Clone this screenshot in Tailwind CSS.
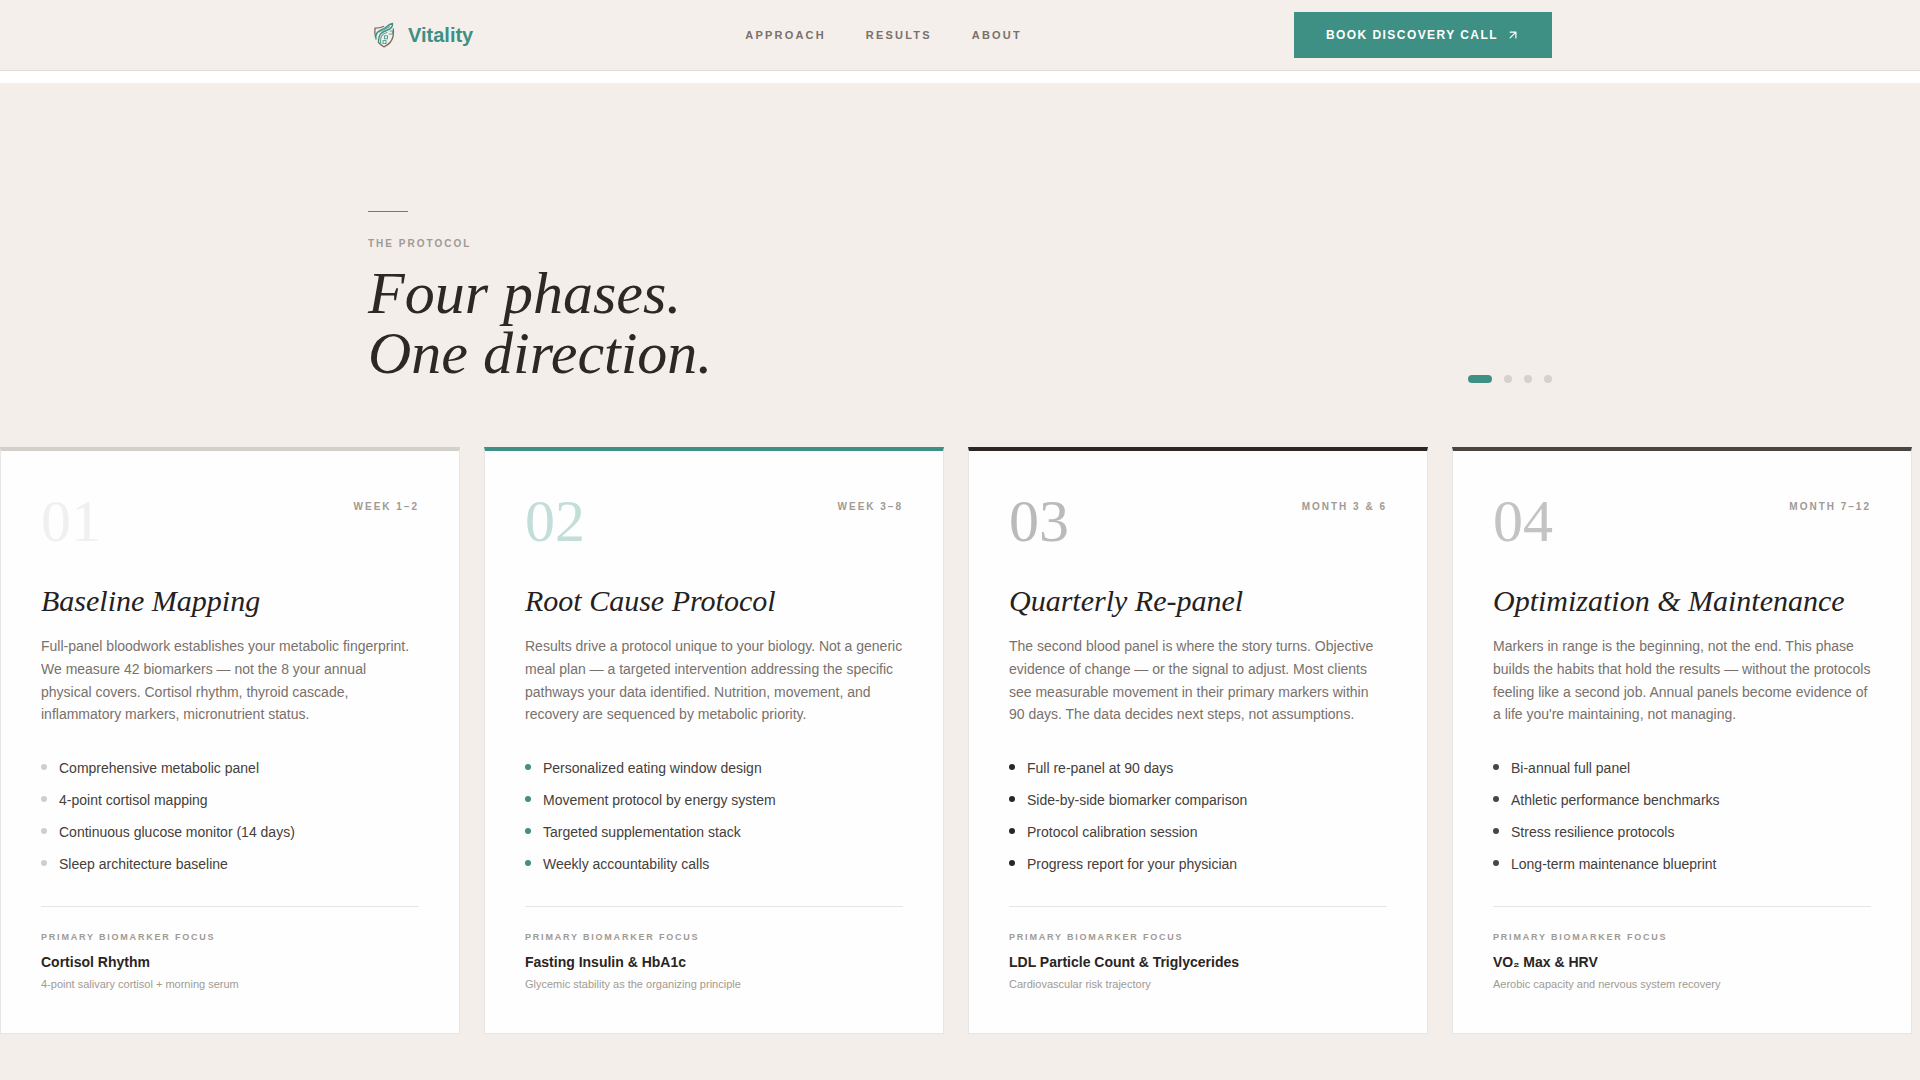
<!DOCTYPE html>
<html lang="en">
<head>
<meta charset="utf-8">
<meta name="viewport" content="width=device-width, initial-scale=1">
<title>Vitality</title>
<script src="https://cdn.jsdelivr.net/npm/@tailwindcss/browser@4"></script>
</head>
<body class="flex min-h-screen flex-col bg-white font-['Liberation_Sans',Arial,sans-serif]">
<header class="border-b border-[#dfdcd9] bg-[#f4efeb]">
  <div class="mx-auto flex max-w-[1280px] items-center justify-between px-12 py-3">
    <a href="#" class="flex items-center gap-2">
      <svg class="size-8" viewBox="0 0 32 32" fill="none" stroke-linecap="round" stroke-linejoin="round" aria-hidden="true">
        <path d="M15.500 7.500C12.500 9 9.800 9.200 7 9.200C6.700 12 6.700 15 7.500 18M25.300 10C26 16 24.500 24 16 27.800C13.500 26.800 11.500 25 10.300 23.200" stroke="#7a6a60" stroke-width="1.300"/>
        <path d="M8 20C7 12.500 11.500 11.800 16 9.500C19 8 20 5.500 24.500 4.500C24.800 8 23 9.800 19.500 11C14 13 10.800 14.500 10.500 22.500" stroke="#3d9083" stroke-width="1.400"/>
        <path d="M12.800 25C11.800 17.500 14 14.800 19 13.500M22 12h2.500v3h-3.500M11 13C14 11 18 10 21.500 7.500" stroke="#5ba396" stroke-width="1.100"/>
        <path d="M16.500 16.800h3v2.900h-3zM15 21.500h3v3h-3z" stroke="#5ba396" stroke-width="1.100"/>
      </svg>
      <span class="text-xl font-bold text-[#3d9083]">Vitality</span>
    </a>
    <nav class="flex gap-10 text-[11px] font-bold tracking-[0.2em] text-[#78716c]">
      <a href="#approach">APPROACH</a>
      <a href="#results">RESULTS</a>
      <a href="#about">ABOUT</a>
    </nav>
    <button type="button" class="flex items-center gap-2 bg-[#3d9083] px-8 py-[14px] text-xs/[18px] font-bold tracking-[0.12em] text-white">
      BOOK DISCOVERY CALL
      <svg class="size-[14px]" viewBox="0 0 24 24" fill="none" stroke="currentColor" stroke-width="2" stroke-linecap="round" stroke-linejoin="round" aria-hidden="true"><path d="M7 7h10v10M7 17 17 7"/></svg>
    </button>
  </div>
</header>

<main class="mt-3 grow bg-[#f3eeea] pt-32 pb-10" id="approach">
  <div class="mx-auto flex max-w-[1280px] items-end justify-between px-12">
    <div>
      <div class="h-px w-10 bg-[#3d9083]"></div>
      <p class="mt-6 text-[10px]/[15px] font-bold tracking-[0.2em] text-[#a09a94]">THE PROTOCOL</p>
      <h1 class="mt-3 font-['Liberation_Serif',serif] text-[60px]/[60px] text-[#2d2825] italic">Four phases.<br>One direction.</h1>
    </div>
    <div class="flex gap-3">
      <button type="button" aria-label="Phase 1" class="h-2 w-6 rounded-full bg-[#3d9083]"></button>
      <button type="button" aria-label="Phase 2" class="size-2 rounded-full bg-[#d6d1cd]"></button>
      <button type="button" aria-label="Phase 3" class="size-2 rounded-full bg-[#d6d1cd]"></button>
      <button type="button" aria-label="Phase 4" class="size-2 rounded-full bg-[#d6d1cd]"></button>
    </div>
  </div>

  <div class="mt-16 flex gap-6 overflow-x-auto">
    <article class="w-[460px] shrink-0 border border-t-4 border-[#e7e5e4] border-t-[#d3d0cc] bg-[#fefefe] p-10">
      <div class="flex items-start justify-between">
        <span class="font-['Liberation_Serif',serif] text-[60px]/[60px] text-[#f0f0f0]">01</span>
        <span class="pt-2 text-[10px]/[15px] font-bold tracking-[0.2em] text-[#a09a94]">WEEK 1–2</span>
      </div>
      <h2 class="mt-8 font-['Liberation_Serif',serif] text-3xl text-[#24211f] italic">Baseline Mapping</h2>
      <p class="mt-4 text-sm leading-relaxed text-[#78716c]">Full-panel bloodwork establishes your metabolic fingerprint. We measure 42 biomarkers — not the 8 your annual physical covers. Cortisol rhythm, thyroid cascade, inflammatory markers, micronutrient status.</p>
      <ul class="mt-8 flex flex-col gap-3 text-sm text-[#44403c]">
        <li class="flex gap-3"><span class="mt-[6px] size-[6px] rounded-full bg-[#d0cecb]"></span>Comprehensive metabolic panel</li>
        <li class="flex gap-3"><span class="mt-[6px] size-[6px] rounded-full bg-[#d0cecb]"></span>4-point cortisol mapping</li>
        <li class="flex gap-3"><span class="mt-[6px] size-[6px] rounded-full bg-[#d0cecb]"></span>Continuous glucose monitor (14 days)</li>
        <li class="flex gap-3"><span class="mt-[6px] size-[6px] rounded-full bg-[#d0cecb]"></span>Sleep architecture baseline</li>
      </ul>
      <div class="mt-8 border-t border-[#e7e5e4] pt-6">
        <p class="text-[9px]/[13px] font-bold tracking-[0.2em] text-[#a09a94]">PRIMARY BIOMARKER FOCUS</p>
        <p class="mt-2 text-sm font-bold text-[#292524]">Cortisol Rhythm</p>
        <p class="mt-1 text-[11px]/[17px] text-[#a09a94]">4-point salivary cortisol + morning serum</p>
      </div>
    </article>

    <article class="w-[460px] shrink-0 border border-t-4 border-[#e7e5e4] border-t-[#3d9083] bg-[#fefefe] p-10">
      <div class="flex items-start justify-between">
        <span class="font-['Liberation_Serif',serif] text-[60px]/[60px] text-[#c3ddd9]">02</span>
        <span class="pt-2 text-[10px]/[15px] font-bold tracking-[0.2em] text-[#a09a94]">WEEK 3–8</span>
      </div>
      <h2 class="mt-8 font-['Liberation_Serif',serif] text-3xl text-[#24211f] italic">Root Cause Protocol</h2>
      <p class="mt-4 text-sm leading-relaxed text-[#78716c]">Results drive a protocol unique to your biology. Not a generic meal plan — a targeted intervention addressing the specific pathways your data identified. Nutrition, movement, and recovery are sequenced by metabolic priority.</p>
      <ul class="mt-8 flex flex-col gap-3 text-sm text-[#44403c]">
        <li class="flex gap-3"><span class="mt-[6px] size-[6px] rounded-full bg-[#3d9083]"></span>Personalized eating window design</li>
        <li class="flex gap-3"><span class="mt-[6px] size-[6px] rounded-full bg-[#3d9083]"></span>Movement protocol by energy system</li>
        <li class="flex gap-3"><span class="mt-[6px] size-[6px] rounded-full bg-[#3d9083]"></span>Targeted supplementation stack</li>
        <li class="flex gap-3"><span class="mt-[6px] size-[6px] rounded-full bg-[#3d9083]"></span>Weekly accountability calls</li>
      </ul>
      <div class="mt-8 border-t border-[#e7e5e4] pt-6">
        <p class="text-[9px]/[13px] font-bold tracking-[0.2em] text-[#a09a94]">PRIMARY BIOMARKER FOCUS</p>
        <p class="mt-2 text-sm font-bold text-[#292524]">Fasting Insulin &amp; HbA1c</p>
        <p class="mt-1 text-[11px]/[17px] text-[#a09a94]">Glycemic stability as the organizing principle</p>
      </div>
    </article>

    <article class="w-[460px] shrink-0 border border-t-4 border-[#e7e5e4] border-t-[#2c2624] bg-[#fefefe] p-10">
      <div class="flex items-start justify-between">
        <span class="font-['Liberation_Serif',serif] text-[60px]/[60px] text-[#bbbaba]">03</span>
        <span class="pt-2 text-[10px]/[15px] font-bold tracking-[0.2em] text-[#a09a94]">MONTH 3 &amp; 6</span>
      </div>
      <h2 class="mt-8 font-['Liberation_Serif',serif] text-3xl text-[#24211f] italic">Quarterly Re-panel</h2>
      <p class="mt-4 text-sm leading-relaxed text-[#78716c]">The second blood panel is where the story turns. Objective evidence of change — or the signal to adjust. Most clients see measurable movement in their primary markers within 90 days. The data decides next steps, not assumptions.</p>
      <ul class="mt-8 flex flex-col gap-3 text-sm text-[#44403c]">
        <li class="flex gap-3"><span class="mt-[6px] size-[6px] rounded-full bg-[#2c2624]"></span>Full re-panel at 90 days</li>
        <li class="flex gap-3"><span class="mt-[6px] size-[6px] rounded-full bg-[#2c2624]"></span>Side-by-side biomarker comparison</li>
        <li class="flex gap-3"><span class="mt-[6px] size-[6px] rounded-full bg-[#2c2624]"></span>Protocol calibration session</li>
        <li class="flex gap-3"><span class="mt-[6px] size-[6px] rounded-full bg-[#2c2624]"></span>Progress report for your physician</li>
      </ul>
      <div class="mt-8 border-t border-[#e7e5e4] pt-6">
        <p class="text-[9px]/[13px] font-bold tracking-[0.2em] text-[#a09a94]">PRIMARY BIOMARKER FOCUS</p>
        <p class="mt-2 text-sm font-bold text-[#292524]">LDL Particle Count &amp; Triglycerides</p>
        <p class="mt-1 text-[11px]/[17px] text-[#a09a94]">Cardiovascular risk trajectory</p>
      </div>
    </article>

    <article class="w-[460px] shrink-0 border border-t-4 border-[#e7e5e4] border-t-[#4b4542] bg-[#fefefe] p-10">
      <div class="flex items-start justify-between">
        <span class="font-['Liberation_Serif',serif] text-[60px]/[60px] text-[#c4c3c3]">04</span>
        <span class="pt-2 text-[10px]/[15px] font-bold tracking-[0.2em] text-[#a09a94]">MONTH 7–12</span>
      </div>
      <h2 class="mt-8 font-['Liberation_Serif',serif] text-3xl text-[#24211f] italic">Optimization &amp; Maintenance</h2>
      <p class="mt-4 text-sm leading-relaxed text-[#78716c]">Markers in range is the beginning, not the end. This phase builds the habits that hold the results — without the protocols feeling like a second job. Annual panels become evidence of a life you're maintaining, not managing.</p>
      <ul class="mt-8 flex flex-col gap-3 text-sm text-[#44403c]">
        <li class="flex gap-3"><span class="mt-[6px] size-[6px] rounded-full bg-[#4b4542]"></span>Bi-annual full panel</li>
        <li class="flex gap-3"><span class="mt-[6px] size-[6px] rounded-full bg-[#4b4542]"></span>Athletic performance benchmarks</li>
        <li class="flex gap-3"><span class="mt-[6px] size-[6px] rounded-full bg-[#4b4542]"></span>Stress resilience protocols</li>
        <li class="flex gap-3"><span class="mt-[6px] size-[6px] rounded-full bg-[#4b4542]"></span>Long-term maintenance blueprint</li>
      </ul>
      <div class="mt-8 border-t border-[#e7e5e4] pt-6">
        <p class="text-[9px]/[13px] font-bold tracking-[0.2em] text-[#a09a94]">PRIMARY BIOMARKER FOCUS</p>
        <p class="mt-2 text-sm font-bold text-[#292524]">VO₂ Max &amp; HRV</p>
        <p class="mt-1 text-[11px]/[17px] text-[#a09a94]">Aerobic capacity and nervous system recovery</p>
      </div>
    </article>
  </div>
</main>
</body>
</html>
